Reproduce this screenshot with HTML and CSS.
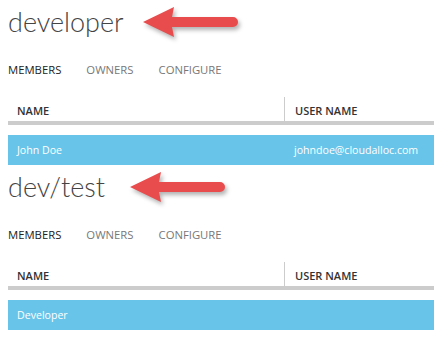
FILE: index.html
```html
<!DOCTYPE html>
<html lang="en">
<head>
  <meta charset="UTF-8">
  <title>Members</title>
  <link rel="stylesheet" href="styles.css">
</head>
<body>
  <div class="group">
    <div class="title-row">
      <h1>developer</h1>
      <svg class="arrow" width="100" height="36" viewBox="0 0 100 36">
        <path d="M2 17 L33 2 L31 12 L92 12 A5 5 0 0 1 92 22 L31 22 L33 32 Z"/>
      </svg>
    </div>
    <div class="tabs">
      <span class="tab active">MEMBERS</span>
      <span class="tab">OWNERS</span>
      <span class="tab">CONFIGURE</span>
    </div>
    <div class="grid">
      <div class="grid-head">
        <div class="col col-name">NAME</div>
        <div class="col col-user">USER NAME</div>
      </div>
      <div class="grid-row selected">
        <div class="col col-name">John Doe</div>
        <div class="col col-user">johndoe@cloudalloc.com</div>
      </div>
    </div>
  </div>

  <div class="group">
    <div class="title-row">
      <h1>dev/test</h1>
      <svg class="arrow arrow-wide" width="100" height="36" viewBox="0 0 100 36">
        <path d="M2 17 L33 2 L31 12 L92 12 A5 5 0 0 1 92 22 L31 22 L33 32 Z"/>
      </svg>
    </div>
    <div class="tabs">
      <span class="tab active">MEMBERS</span>
      <span class="tab">OWNERS</span>
      <span class="tab">CONFIGURE</span>
    </div>
    <div class="grid">
      <div class="grid-head">
        <div class="col col-name">NAME</div>
        <div class="col col-user">USER NAME</div>
      </div>
      <div class="grid-row selected">
        <div class="col col-name">Developer</div>
        <div class="col col-user"></div>
      </div>
    </div>
  </div>
</body>
</html>
```

FILE: styles.css
```css
* {
  margin: 0;
  padding: 0;
  box-sizing: border-box;
}

body {
  font-family: 'Open Sans', 'Noto Sans', sans-serif;
  background: #fff;
  color: #333;
  margin-left: 8px;
  overflow: hidden;
}

.group {
  height: 165px;
}

.title-row {
  display: flex;
  align-items: center;
  height: 44px;
}

.title-row h1 {
  font-family: 'Lato', 'Open Sans', sans-serif;
  font-size: 27px;
  font-weight: 300;
  color: #444;
  line-height: 40px;
}

.arrow {
  margin-left: 17px;
  margin-top: 2px;
  fill: #e84c4c;
  filter: drop-shadow(2px 3px 2px rgba(0, 0, 0, 0.3));
}

.arrow-wide {
  margin-left: 23px;
}

.tabs {
  display: flex;
  gap: 25px;
  margin-top: 14px;
  height: 22px;
  align-items: center;
}

.tab {
  font-size: 11.3px;
  color: #777;
}

.tab.active {
  color: #222;
}

.grid {
  margin-top: 17px;
}

.grid-head {
  display: flex;
  height: 28px;
  border-bottom: 4px solid #ccc;
  font-size: 11px;
  font-weight: 600;
  color: #333;
}

.grid-head .col {
  display: flex;
  align-items: center;
  padding-top: 2px;
}

.grid-head .col-user {
  border-left: 1px solid #ccc;
}

.grid-row {
  display: flex;
  height: 30px;
  margin-top: 10px;
  font-size: 10.6px;
  align-items: center;
}

.grid-row.selected {
  background: #68c4e9;
  color: #fff;
}

.col-name {
  width: 276px;
  padding-left: 9px;
}

.col-user {
  flex: 1;
  padding-left: 10px;
  height: 100%;
  display: flex;
  align-items: center;
}
```
